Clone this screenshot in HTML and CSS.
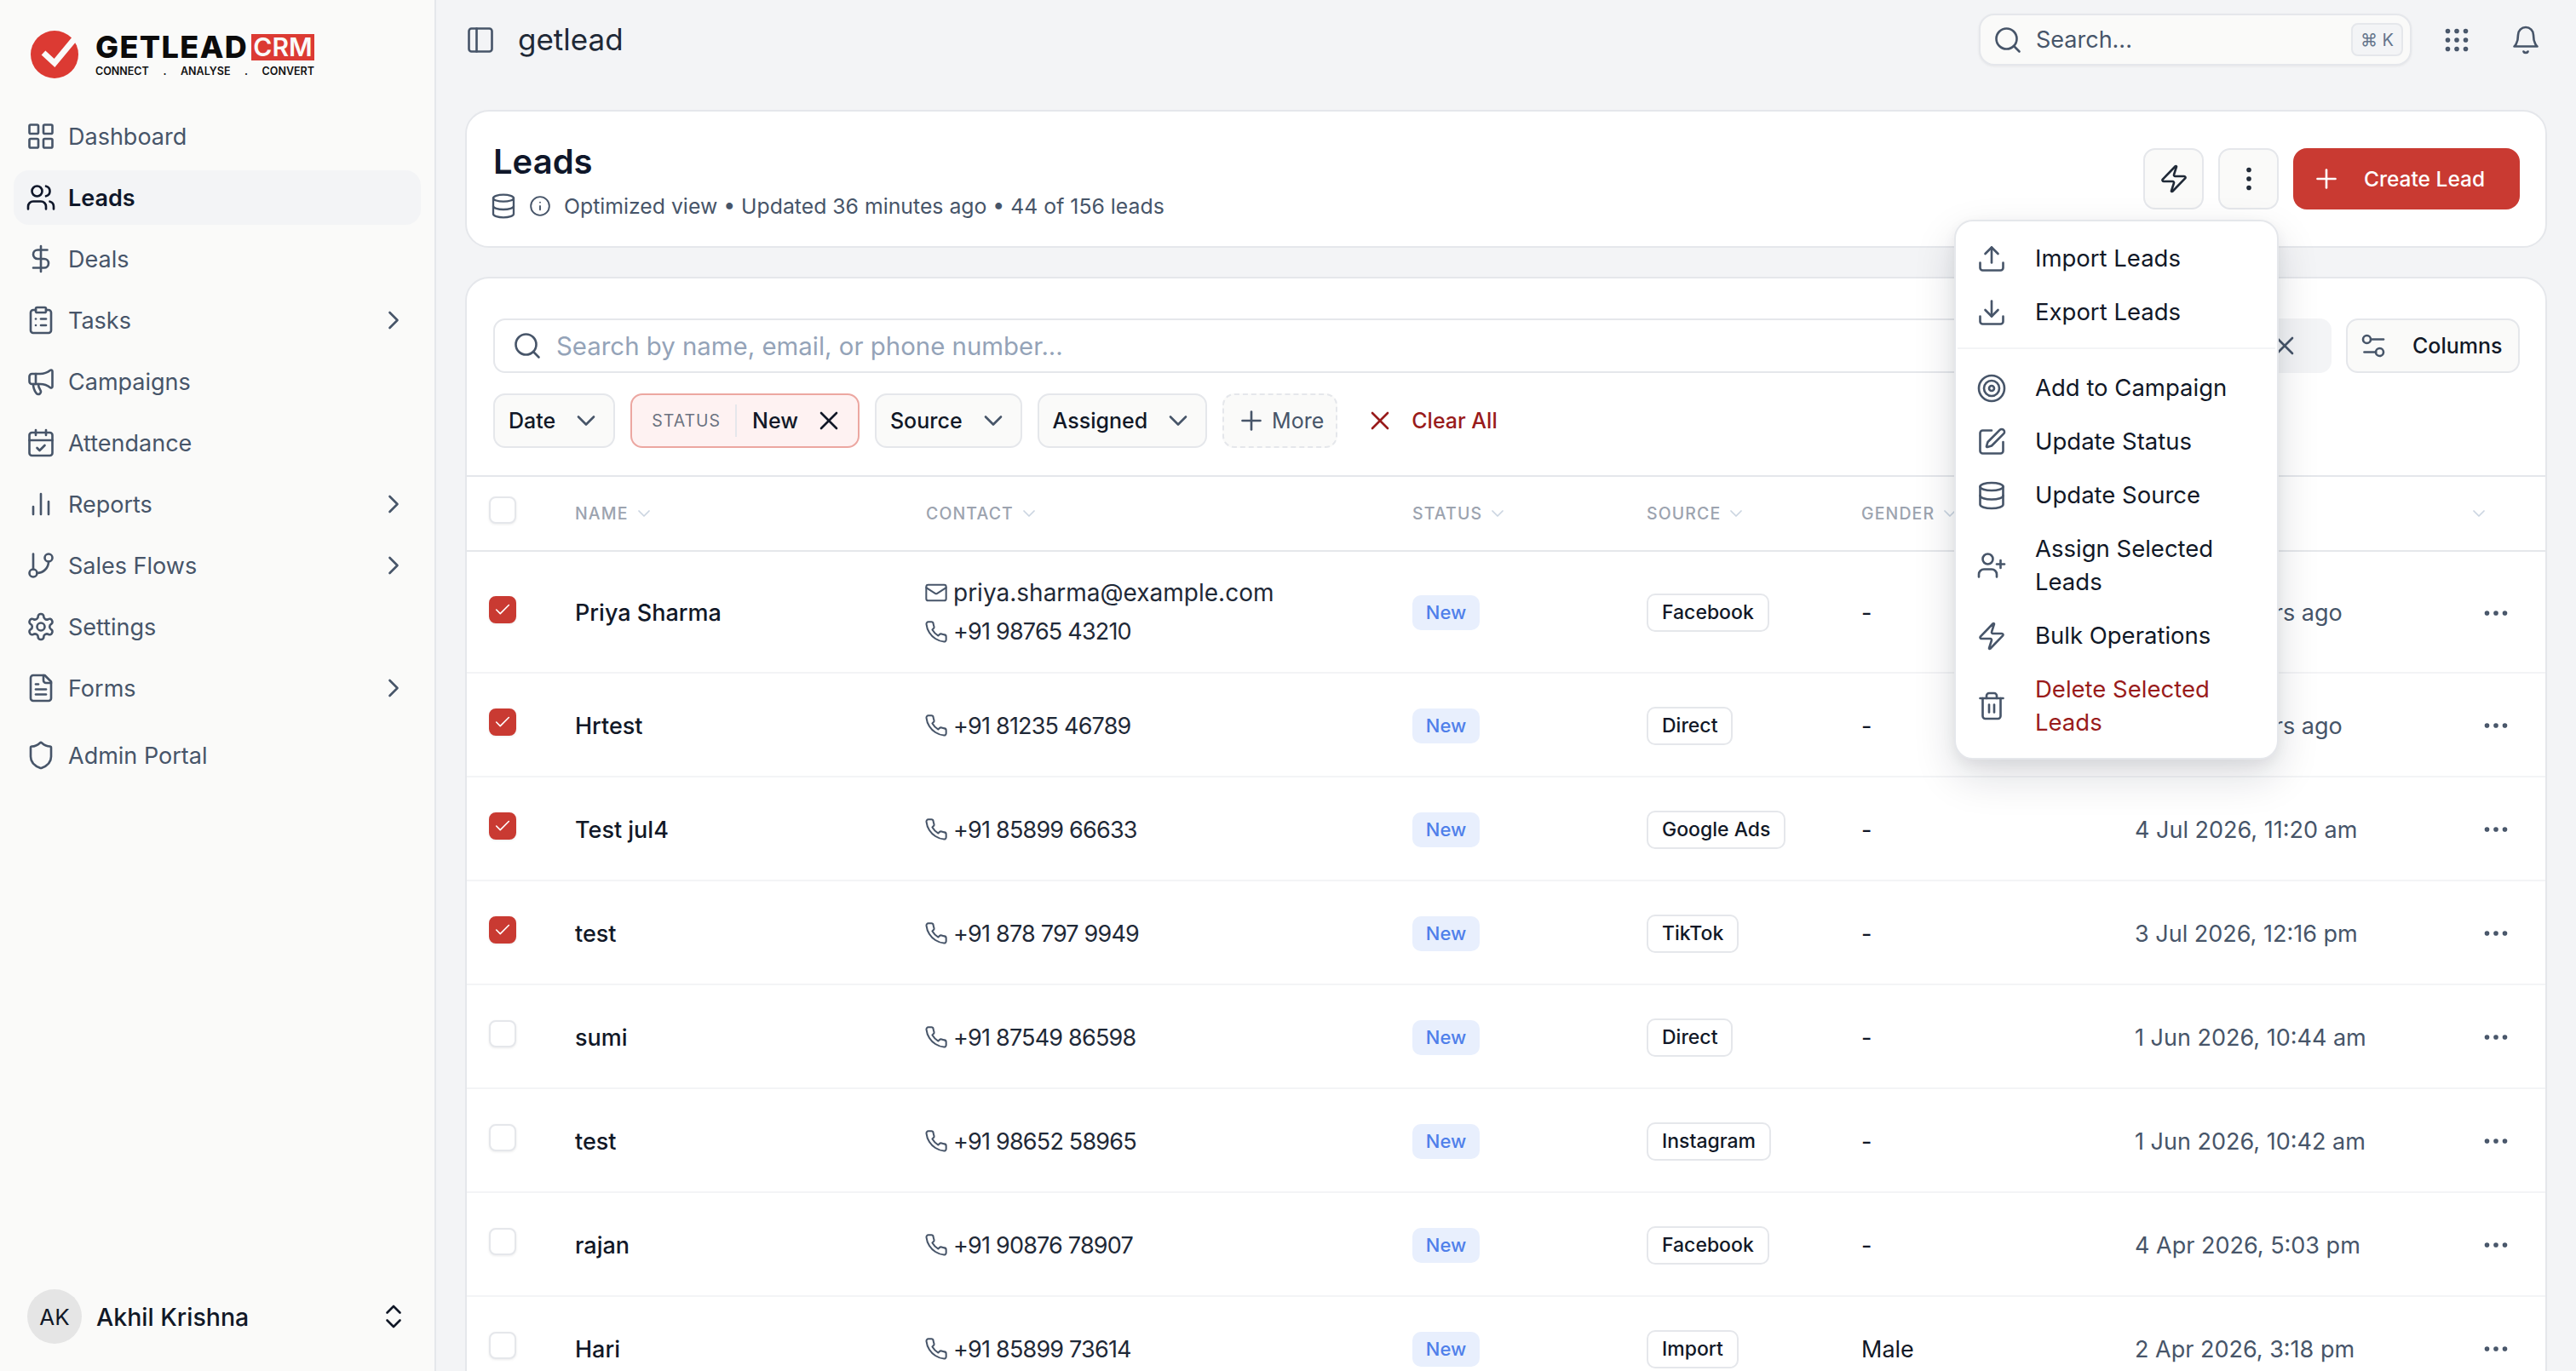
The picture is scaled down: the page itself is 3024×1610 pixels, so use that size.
FILE: index.html
```html
<!DOCTYPE html>
<html lang="en">
<head>
    <meta charset="UTF-8">
    <meta name="viewport" content="width=device-width, initial-scale=1.0">
    <title>Leads - Getlead CRM</title>
    <link rel="stylesheet" href="styles.css">
</head>
<body>
    <svg class="sprite" xmlns="http://www.w3.org/2000/svg">
        <symbol id="i-grid" viewBox="0 0 24 24"><rect x="3" y="3" width="7" height="7" rx="1"/><rect x="14" y="3" width="7" height="7" rx="1"/><rect x="14" y="14" width="7" height="7" rx="1"/><rect x="3" y="14" width="7" height="7" rx="1"/></symbol>
        <symbol id="i-users" viewBox="0 0 24 24"><path d="M16 21v-2a4 4 0 0 0-4-4H6a4 4 0 0 0-4 4v2"/><circle cx="9" cy="7" r="4"/><path d="M22 21v-2a4 4 0 0 0-3-3.87"/><path d="M16 3.13a4 4 0 0 1 0 7.75"/></symbol>
        <symbol id="i-dollar" viewBox="0 0 24 24"><path d="M12 2v20"/><path d="M17 5H9.5a3.5 3.5 0 0 0 0 7h5a3.5 3.5 0 0 1 0 7H6"/></symbol>
        <symbol id="i-clipboard" viewBox="0 0 24 24"><rect x="8" y="2" width="8" height="4" rx="1"/><path d="M16 4h2a2 2 0 0 1 2 2v14a2 2 0 0 1-2 2H6a2 2 0 0 1-2-2V6a2 2 0 0 1 2-2h2"/><path d="M12 11h4"/><path d="M12 16h4"/><path d="M8 11h.01"/><path d="M8 16h.01"/></symbol>
        <symbol id="i-megaphone" viewBox="0 0 24 24"><path d="M11 6a13 13 0 0 0 8.4-2.8A1 1 0 0 1 21 4v12a1 1 0 0 1-1.6.8A13 13 0 0 0 11 14H5a2 2 0 0 1-2-2V8a2 2 0 0 1 2-2z"/><path d="M6 14a12 12 0 0 0 2.4 7.2 2 2 0 0 0 3.2-2.4A8 8 0 0 1 10 14"/><path d="M8 6v8"/></symbol>
        <symbol id="i-calendar" viewBox="0 0 24 24"><path d="M8 2v4"/><path d="M16 2v4"/><rect x="3" y="4" width="18" height="18" rx="2"/><path d="M3 10h18"/><path d="m9 16 2 2 4-4"/></symbol>
        <symbol id="i-bars" viewBox="0 0 24 24"><path d="M18 20V10"/><path d="M12 20V4"/><path d="M6 20v-6"/></symbol>
        <symbol id="i-branch" viewBox="0 0 24 24"><path d="M6 3v12"/><circle cx="18" cy="6" r="3"/><circle cx="6" cy="18" r="3"/><path d="M18 9a9 9 0 0 1-9 9"/></symbol>
        <symbol id="i-settings" viewBox="0 0 24 24"><path d="M12.22 2h-.44a2 2 0 0 0-2 2v.18a2 2 0 0 1-1 1.73l-.43.25a2 2 0 0 1-2 0l-.15-.08a2 2 0 0 0-2.73.73l-.22.38a2 2 0 0 0 .73 2.73l.15.1a2 2 0 0 1 1 1.72v.51a2 2 0 0 1-1 1.74l-.15.09a2 2 0 0 0-.73 2.73l.22.38a2 2 0 0 0 2.73.73l.15-.08a2 2 0 0 1 2 0l.43.25a2 2 0 0 1 1 1.73V20a2 2 0 0 0 2 2h.44a2 2 0 0 0 2-2v-.18a2 2 0 0 1 1-1.73l.43-.25a2 2 0 0 1 2 0l.15.08a2 2 0 0 0 2.73-.73l.22-.39a2 2 0 0 0-.73-2.73l-.15-.08a2 2 0 0 1-1-1.74v-.5a2 2 0 0 1 1-1.74l.15-.09a2 2 0 0 0 .73-2.73l-.22-.38a2 2 0 0 0-2.73-.73l-.15.08a2 2 0 0 1-2 0l-.43-.25a2 2 0 0 1-1-1.73V4a2 2 0 0 0-2-2z"/><circle cx="12" cy="12" r="3"/></symbol>
        <symbol id="i-file" viewBox="0 0 24 24"><path d="M15 2H6a2 2 0 0 0-2 2v16a2 2 0 0 0 2 2h12a2 2 0 0 0 2-2V7Z"/><path d="M14 2v4a2 2 0 0 0 2 2h4"/><path d="M10 9H8"/><path d="M16 13H8"/><path d="M16 17H8"/></symbol>
        <symbol id="i-shield" viewBox="0 0 24 24"><path d="M20 13c0 5-3.5 7.5-7.66 8.95a1 1 0 0 1-.67-.01C7.5 20.5 4 18 4 13V6a1 1 0 0 1 1-1c2 0 4.5-1.2 6.24-2.72a1.17 1.17 0 0 1 1.52 0C14.51 3.81 17 5 19 5a1 1 0 0 1 1 1z"/></symbol>
        <symbol id="i-right" viewBox="0 0 24 24"><path d="m9 18 6-6-6-6"/></symbol>
        <symbol id="i-down" viewBox="0 0 24 24"><path d="m6 9 6 6 6-6"/></symbol>
        <symbol id="i-updown" viewBox="0 0 24 24"><path d="m7 15 5 5 5-5"/><path d="m7 9 5-5 5 5"/></symbol>
        <symbol id="i-panel" viewBox="0 0 24 24"><rect x="3" y="3" width="18" height="18" rx="2"/><path d="M9 3v18"/></symbol>
        <symbol id="i-search" viewBox="0 0 24 24"><circle cx="11" cy="11" r="8"/><path d="m21 21-4.3-4.3"/></symbol>
        <symbol id="i-grip" viewBox="0 0 24 24"><circle cx="5" cy="5" r="1"/><circle cx="12" cy="5" r="1"/><circle cx="19" cy="5" r="1"/><circle cx="5" cy="12" r="1"/><circle cx="12" cy="12" r="1"/><circle cx="19" cy="12" r="1"/><circle cx="5" cy="19" r="1"/><circle cx="12" cy="19" r="1"/><circle cx="19" cy="19" r="1"/></symbol>
        <symbol id="i-bell" viewBox="0 0 24 24"><path d="M6 8a6 6 0 0 1 12 0c0 7 3 9 3 9H3s3-2 3-9"/><path d="M10.3 21a1.94 1.94 0 0 0 3.4 0"/></symbol>
        <symbol id="i-zap" viewBox="0 0 24 24"><path d="M4 14a1 1 0 0 1-.78-1.63l9.9-10.2a.5.5 0 0 1 .86.46l-1.92 6.02A1 1 0 0 0 13 10h7a1 1 0 0 1 .78 1.63l-9.9 10.2a.5.5 0 0 1-.86-.46l1.92-6.02A1 1 0 0 0 11 14z"/></symbol>
        <symbol id="i-dots-v" viewBox="0 0 24 24"><circle cx="12" cy="5" r="1"/><circle cx="12" cy="12" r="1"/><circle cx="12" cy="19" r="1"/></symbol>
        <symbol id="i-dots-h" viewBox="0 0 24 24"><circle cx="5" cy="12" r="1"/><circle cx="12" cy="12" r="1"/><circle cx="19" cy="12" r="1"/></symbol>
        <symbol id="i-plus" viewBox="0 0 24 24"><path d="M5 12h14"/><path d="M12 5v14"/></symbol>
        <symbol id="i-db" viewBox="0 0 24 24"><ellipse cx="12" cy="5" rx="9" ry="3"/><path d="M3 5V19A9 3 0 0 0 21 19V5"/><path d="M3 12A9 3 0 0 0 21 12"/></symbol>
        <symbol id="i-info" viewBox="0 0 24 24"><circle cx="12" cy="12" r="10"/><path d="M12 16v-4"/><path d="M12 8h.01"/></symbol>
        <symbol id="i-x" viewBox="0 0 24 24"><path d="M18 6 6 18"/><path d="m6 6 12 12"/></symbol>
        <symbol id="i-sliders" viewBox="0 0 24 24"><path d="M20 7h-9"/><path d="M14 17H5"/><circle cx="17" cy="17" r="3"/><circle cx="7" cy="7" r="3"/></symbol>
        <symbol id="i-upload" viewBox="0 0 24 24"><path d="M21 15v4a2 2 0 0 1-2 2H5a2 2 0 0 1-2-2v-4"/><path d="m17 8-5-5-5 5"/><path d="M12 3v12"/></symbol>
        <symbol id="i-download" viewBox="0 0 24 24"><path d="M21 15v4a2 2 0 0 1-2 2H5a2 2 0 0 1-2-2v-4"/><path d="m7 10 5 5 5-5"/><path d="M12 15V3"/></symbol>
        <symbol id="i-target" viewBox="0 0 24 24"><circle cx="12" cy="12" r="10"/><circle cx="12" cy="12" r="6"/><circle cx="12" cy="12" r="2"/></symbol>
        <symbol id="i-pen" viewBox="0 0 24 24"><path d="M12 3H5a2 2 0 0 0-2 2v14a2 2 0 0 0 2 2h14a2 2 0 0 0 2-2v-7"/><path d="M18.375 2.625a1 1 0 0 1 3 3l-9.013 9.014a2 2 0 0 1-.853.505l-2.873.84a.5.5 0 0 1-.62-.62l.84-2.873a2 2 0 0 1 .506-.852z"/></symbol>
        <symbol id="i-user-plus" viewBox="0 0 24 24"><path d="M16 21v-2a4 4 0 0 0-4-4H6a4 4 0 0 0-4 4v2"/><circle cx="9" cy="7" r="4"/><path d="M19 8v6"/><path d="M22 11h-6"/></symbol>
        <symbol id="i-trash" viewBox="0 0 24 24"><path d="M3 6h18"/><path d="M19 6v14c0 1-1 2-2 2H7c-1 0-2-1-2-2V6"/><path d="M8 6V4c0-1 1-2 2-2h4c1 0 2 1 2 2v2"/><path d="M10 11v6"/><path d="M14 11v6"/></symbol>
        <symbol id="i-mail" viewBox="0 0 24 24"><rect x="2" y="4" width="20" height="16" rx="2"/><path d="m22 7-8.97 5.7a1.94 1.94 0 0 1-2.06 0L2 7"/></symbol>
        <symbol id="i-phone" viewBox="0 0 24 24"><path d="M22 16.92v3a2 2 0 0 1-2.18 2 19.79 19.79 0 0 1-8.63-3.07 19.5 19.5 0 0 1-6-6 19.79 19.79 0 0 1-3.07-8.67A2 2 0 0 1 4.11 2h3a2 2 0 0 1 2 1.72 12.84 12.84 0 0 0 .7 2.81 2 2 0 0 1-.45 2.11L8.09 9.91a16 16 0 0 0 6 6l1.27-1.27a2 2 0 0 1 2.11-.45 12.84 12.84 0 0 0 2.81.7A2 2 0 0 1 22 16.92z"/></symbol>
        <symbol id="i-check" viewBox="0 0 24 24"><path d="M20 6 9 17l-5-5"/></symbol>
    </svg>

    <aside class="sidebar">
        <div class="logo">
            <svg class="logo-mark" viewBox="0 0 56 56">
                <circle cx="28" cy="28" r="28" fill="#dc3a33"/>
                <path d="M15 26l13 12L52 9" fill="none" stroke="#fafaf9" stroke-width="7"/>
            </svg>
            <div class="logo-text">
                <div class="logo-top"><span class="logo-name">GETLEAD</span><span class="logo-crm">CRM</span></div>
                <div class="logo-tag"><span>CONNECT</span><span>.</span><span>ANALYSE</span><span>.</span><span>CONVERT</span></div>
            </div>
        </div>
        <nav class="nav">
            <a class="nav-item"><svg class="icon"><use href="#i-grid"/></svg>Dashboard</a>
            <a class="nav-item active"><svg class="icon"><use href="#i-users"/></svg>Leads</a>
            <a class="nav-item"><svg class="icon"><use href="#i-dollar"/></svg>Deals</a>
            <a class="nav-item"><svg class="icon"><use href="#i-clipboard"/></svg>Tasks<svg class="icon nav-arrow"><use href="#i-right"/></svg></a>
            <a class="nav-item"><svg class="icon"><use href="#i-megaphone"/></svg>Campaigns</a>
            <a class="nav-item"><svg class="icon"><use href="#i-calendar"/></svg>Attendance</a>
            <a class="nav-item"><svg class="icon"><use href="#i-bars"/></svg>Reports<svg class="icon nav-arrow"><use href="#i-right"/></svg></a>
            <a class="nav-item"><svg class="icon"><use href="#i-branch"/></svg>Sales Flows<svg class="icon nav-arrow"><use href="#i-right"/></svg></a>
            <a class="nav-item"><svg class="icon"><use href="#i-settings"/></svg>Settings</a>
            <a class="nav-item"><svg class="icon"><use href="#i-file"/></svg>Forms<svg class="icon nav-arrow"><use href="#i-right"/></svg></a>
            <a class="nav-item nav-admin"><svg class="icon"><use href="#i-shield"/></svg>Admin Portal</a>
        </nav>
        <div class="user">
            <div class="avatar">AK</div>
            <div class="user-name">Akhil Krishna</div>
            <svg class="icon user-switch"><use href="#i-updown"/></svg>
        </div>
    </aside>

    <main class="main">
        <header class="topbar">
            <svg class="icon"><use href="#i-panel"/></svg>
            <div class="workspace">getlead</div>
            <div class="global-search">
                <svg class="icon"><use href="#i-search"/></svg>
                <span class="global-search-text">Search...</span>
                <kbd class="kbd">⌘ K</kbd>
            </div>
            <svg class="icon top-grip"><use href="#i-grip"/></svg>
            <svg class="icon top-bell"><use href="#i-bell"/></svg>
        </header>

        <section class="card page-head">
            <div class="page-title">
                <h1>Leads</h1>
                <div class="page-sub">
                    <svg class="icon icon-db"><use href="#i-db"/></svg>
                    <svg class="icon icon-info"><use href="#i-info"/></svg>
                    <span>Optimized view • Updated 36 minutes ago • 44 of 156 leads</span>
                </div>
            </div>
            <div class="page-actions">
                <button class="square-btn"><svg class="icon"><use href="#i-zap"/></svg></button>
                <div class="menu-wrap">
                    <button class="square-btn"><svg class="icon"><use href="#i-dots-v"/></svg></button>
                    <div class="menu">
                        <div class="menu-item"><svg class="icon"><use href="#i-upload"/></svg>Import Leads</div>
                        <div class="menu-item"><svg class="icon"><use href="#i-download"/></svg>Export Leads</div>
                        <div class="menu-divider"></div>
                        <div class="menu-item"><svg class="icon"><use href="#i-target"/></svg>Add to Campaign</div>
                        <div class="menu-item"><svg class="icon"><use href="#i-pen"/></svg>Update Status</div>
                        <div class="menu-item"><svg class="icon"><use href="#i-db"/></svg>Update Source</div>
                        <div class="menu-item"><svg class="icon"><use href="#i-user-plus"/></svg>Assign Selected Leads</div>
                        <div class="menu-item"><svg class="icon"><use href="#i-zap"/></svg>Bulk Operations</div>
                        <div class="menu-item danger"><svg class="icon"><use href="#i-trash"/></svg>Delete Selected Leads</div>
                    </div>
                </div>
                <button class="create-btn"><svg class="icon"><use href="#i-plus"/></svg>Create Lead</button>
            </div>
        </section>

        <section class="card leads-card">
            <div class="toolbar">
                <div class="search-row">
                    <div class="lead-search">
                        <svg class="icon"><use href="#i-search"/></svg>
                        <span class="placeholder">Search by name, email, or phone number...</span>
                    </div>
                    <button class="search-clear"><svg class="icon"><use href="#i-x"/></svg></button>
                    <button class="chip columns-btn"><svg class="icon"><use href="#i-sliders"/></svg>Columns</button>
                </div>
                <div class="filter-row">
                    <button class="chip">Date<svg class="icon"><use href="#i-down"/></svg></button>
                    <button class="chip chip-active"><span class="chip-key">STATUS</span><span class="chip-val">New</span><svg class="icon"><use href="#i-x"/></svg></button>
                    <button class="chip">Source<svg class="icon"><use href="#i-down"/></svg></button>
                    <button class="chip">Assigned<svg class="icon"><use href="#i-down"/></svg></button>
                    <button class="chip chip-more"><svg class="icon"><use href="#i-plus"/></svg>More</button>
                    <button class="clear-all"><svg class="icon"><use href="#i-x"/></svg>Clear All</button>
                </div>
            </div>
            <table class="leads">
                <colgroup>
                    <col class="c-check"><col class="c-name"><col class="c-contact"><col class="c-status"><col class="c-source"><col class="c-gender"><col class="c-date"><col class="c-actions">
                </colgroup>
                <thead>
                    <tr>
                        <th><span class="box"></span></th>
                        <th>NAME<svg class="icon sort"><use href="#i-down"/></svg></th>
                        <th>CONTACT<svg class="icon sort"><use href="#i-down"/></svg></th>
                        <th>STATUS<svg class="icon sort"><use href="#i-down"/></svg></th>
                        <th>SOURCE<svg class="icon sort"><use href="#i-down"/></svg></th>
                        <th>GENDER<svg class="icon sort"><use href="#i-down"/></svg></th>
                        <th>CREATED</th>
                        <th class="actions-head"><svg class="icon sort"><use href="#i-down"/></svg></th>
                    </tr>
                </thead>
                <tbody>
                    <tr class="row-tall">
                        <td><span class="box checked"><svg class="icon"><use href="#i-check"/></svg></span></td>
                        <td class="name">Priya Sharma</td>
                        <td>
                            <div class="contact contact-email"><svg class="icon"><use href="#i-mail"/></svg>priya.sharma@example.com</div>
                            <div class="contact phone"><svg class="icon"><use href="#i-phone"/></svg>+91 98765 43210</div>
                        </td>
                        <td><span class="badge">New</span></td>
                        <td><span class="source">Facebook</span></td>
                        <td>-</td>
                        <td class="date">about 16 hours ago</td>
                        <td class="row-menu"><svg class="icon"><use href="#i-dots-h"/></svg></td>
                    </tr>
                    <tr>
                        <td><span class="box checked"><svg class="icon"><use href="#i-check"/></svg></span></td>
                        <td class="name">Hrtest</td>
                        <td><div class="contact phone"><svg class="icon"><use href="#i-phone"/></svg>+91 81235 46789</div></td>
                        <td><span class="badge">New</span></td>
                        <td><span class="source">Direct</span></td>
                        <td>-</td>
                        <td class="date">about 16 hours ago</td>
                        <td class="row-menu"><svg class="icon"><use href="#i-dots-h"/></svg></td>
                    </tr>
                    <tr>
                        <td><span class="box checked"><svg class="icon"><use href="#i-check"/></svg></span></td>
                        <td class="name">Test jul4</td>
                        <td><div class="contact phone"><svg class="icon"><use href="#i-phone"/></svg>+91 85899 66633</div></td>
                        <td><span class="badge">New</span></td>
                        <td><span class="source">Google Ads</span></td>
                        <td>-</td>
                        <td class="date">4 Jul 2026, 11:20 am</td>
                        <td class="row-menu"><svg class="icon"><use href="#i-dots-h"/></svg></td>
                    </tr>
                    <tr>
                        <td><span class="box checked"><svg class="icon"><use href="#i-check"/></svg></span></td>
                        <td class="name">test</td>
                        <td><div class="contact phone"><svg class="icon"><use href="#i-phone"/></svg>+91 878 797 9949</div></td>
                        <td><span class="badge">New</span></td>
                        <td><span class="source">TikTok</span></td>
                        <td>-</td>
                        <td class="date">3 Jul 2026, 12:16 pm</td>
                        <td class="row-menu"><svg class="icon"><use href="#i-dots-h"/></svg></td>
                    </tr>
                    <tr>
                        <td><span class="box"></span></td>
                        <td class="name">sumi</td>
                        <td><div class="contact phone"><svg class="icon"><use href="#i-phone"/></svg>+91 87549 86598</div></td>
                        <td><span class="badge">New</span></td>
                        <td><span class="source">Direct</span></td>
                        <td>-</td>
                        <td class="date">1 Jun 2026, 10:44 am</td>
                        <td class="row-menu"><svg class="icon"><use href="#i-dots-h"/></svg></td>
                    </tr>
                    <tr>
                        <td><span class="box"></span></td>
                        <td class="name">test</td>
                        <td><div class="contact phone"><svg class="icon"><use href="#i-phone"/></svg>+91 98652 58965</div></td>
                        <td><span class="badge">New</span></td>
                        <td><span class="source">Instagram</span></td>
                        <td>-</td>
                        <td class="date">1 Jun 2026, 10:42 am</td>
                        <td class="row-menu"><svg class="icon"><use href="#i-dots-h"/></svg></td>
                    </tr>
                    <tr>
                        <td><span class="box"></span></td>
                        <td class="name">rajan</td>
                        <td><div class="contact phone"><svg class="icon"><use href="#i-phone"/></svg>+91 90876 78907</div></td>
                        <td><span class="badge">New</span></td>
                        <td><span class="source">Facebook</span></td>
                        <td>-</td>
                        <td class="date">4 Apr 2026, 5:03 pm</td>
                        <td class="row-menu"><svg class="icon"><use href="#i-dots-h"/></svg></td>
                    </tr>
                    <tr>
                        <td><span class="box"></span></td>
                        <td class="name">Hari</td>
                        <td><div class="contact phone"><svg class="icon"><use href="#i-phone"/></svg>+91 85899 73614</div></td>
                        <td><span class="badge">New</span></td>
                        <td><span class="source">Import</span></td>
                        <td>Male</td>
                        <td class="date">2 Apr 2026, 3:18 pm</td>
                        <td class="row-menu"><svg class="icon"><use href="#i-dots-h"/></svg></td>
                    </tr>
                </tbody>
            </table>
        </section>
    </main>
</body>
</html>
```

FILE: styles.css
```css
* {
    box-sizing: border-box;
}

body {
    font-family: Inter, "Noto Sans", sans-serif;
    font-size: 27px;
    color: #111827;
    background: #f3f4f6;
    margin: 0;
    height: 100vh;
    overflow: hidden;
    display: flex;
}

button {
    font: inherit;
    color: inherit;
    cursor: pointer;
}

.sprite {
    display: none;
}

.icon {
    width: 36px;
    height: 36px;
    flex: none;
    fill: none;
    stroke: currentColor;
    stroke-width: 1.75;
    stroke-linecap: round;
    stroke-linejoin: round;
}

/* sidebar */
.sidebar {
    width: 512px;
    flex: none;
    background: #fafaf9;
    border-right: 2px solid #e5e7eb;
    display: flex;
    flex-direction: column;
    padding: 0 16px;
}

.logo {
    display: flex;
    align-items: flex-start;
    gap: 20px;
    padding: 36px 0 0 20px;
    height: 128px;
}

.logo-mark {
    width: 56px;
    height: 56px;
    flex: none;
}

.logo-text {
    width: 257px;
    padding-top: 4px;
}

.logo-top {
    display: flex;
    justify-content: space-between;
    align-items: center;
    height: 31px;
}

.logo-name {
    font-weight: 800;
    font-size: 36px;
    letter-spacing: 1.4px;
    color: #0b0b0b;
    line-height: 31px;
}

.logo-crm {
    background: #dc3a33;
    color: #fafaf9;
    font-weight: 600;
    font-size: 30px;
    line-height: 31px;
    width: 74px;
    text-align: center;
}

.logo-tag {
    display: flex;
    justify-content: space-between;
    font-size: 12.5px;
    font-weight: 600;
    color: #111;
    margin-top: 6px;
    line-height: 14px;
}

.nav {
    display: flex;
    flex-direction: column;
    gap: 8px;
}

.nav-item {
    display: flex;
    align-items: center;
    gap: 14px;
    height: 64px;
    padding: 0 14px;
    border-radius: 18px;
    color: #475569;
}

.nav-item.active {
    background: #f3f4f6;
    color: #0f172a;
    font-weight: 600;
}

.nav-arrow {
    margin-left: auto;
}

.nav-admin {
    margin-top: 7px;
}

.user {
    margin-top: auto;
    display: flex;
    align-items: center;
    height: 64px;
    margin-bottom: 32px;
    padding-left: 16px;
    gap: 17px;
    font-size: 28.5px;
    font-weight: 500;
}

.avatar {
    width: 64px;
    height: 64px;
    border-radius: 50%;
    background: #e5e5e5;
    display: flex;
    align-items: center;
    justify-content: center;
    font-weight: 400;
    font-size: 26px;
}

.user-switch {
    margin-left: auto;
    margin-right: 14px;
}

/* main column */
.main {
    flex: 1;
    min-width: 0;
    padding: 0 34px;
}

.topbar {
    height: 129px;
    padding-top: 16px;
    display: flex;
    align-items: flex-start;
    color: #475569;
}

.topbar > .icon {
    margin-top: 13px;
}

.workspace {
    margin-left: 26px;
    font-size: 35px;
    line-height: 60px;
    color: #1f2937;
}

.global-search {
    margin-left: auto;
    width: 508px;
    height: 61px;
    display: flex;
    align-items: center;
    gap: 15px;
    padding: 0 8px 0 14px;
    background: #fafaf9;
    border: 2px solid #e5e7eb;
    border-radius: 18px;
    box-shadow: 0 1px 3px rgba(0,0,0,0.06);
}

.global-search-text {
    flex: 1;
}

.kbd {
    width: 61px;
    height: 39px;
    display: flex;
    align-items: center;
    justify-content: center;
    font-family: Inter, "DejaVu Sans", sans-serif;
    font-size: 20px;
    color: #64748b;
    background: #f3f4f6;
    border: 2px solid #e5e7eb;
    border-radius: 8px;
}

.top-grip {
    margin-left: 35px;
}

.top-bell {
    margin-left: 45px;
    margin-right: 7px;
}

.card {
    background: #fff;
    border: 2px solid #e5e7eb;
    border-radius: 28px;
}

.page-head {
    height: 162px;
    padding: 0 30px 0 31px;
    display: flex;
    align-items: center;
    justify-content: space-between;
}

.page-title {
    padding-top: 6px;
}

h1 {
    font-size: 40px;
    font-weight: 600;
    line-height: 48px;
    margin: 0 0 10px;
    color: #0f172a;
}

.page-sub {
    display: flex;
    align-items: center;
    font-size: 24.8px;
    color: #475569;
    height: 36px;
}

.icon-db {
    width: 32px;
    height: 32px;
    margin-left: -4px;
}

.icon-info {
    width: 26px;
    height: 26px;
    margin-left: 14px;
    margin-right: 15px;
}

.page-actions {
    display: flex;
    gap: 17px;
}

.square-btn {
    width: 71px;
    height: 72px;
    background: #fafaf9;
    border: 2px solid #e5e7eb;
    border-radius: 14px;
    display: flex;
    align-items: center;
    justify-content: center;
    color: #1f2937;
    padding: 0;
}

.create-btn {
    width: 266px;
    height: 72px;
    background: #c93a32;
    color: #fff;
    border: 0;
    border-radius: 16px;
    font-size: 24.5px;
    font-weight: 500;
    display: flex;
    align-items: center;
    gap: 26px;
    padding: 0 0 0 21px;
}

/* actions dropdown */
.menu-wrap {
    position: relative;
}

.menu {
    position: absolute;
    top: 84px;
    right: 0;
    width: 381px;
    height: 634px;
    background: #fff;
    border: 2px solid #e5e7eb;
    border-radius: 22px;
    box-shadow: 0 20px 50px rgba(15,23,42,0.14), 0 6px 16px rgba(15,23,42,0.06);
    padding: 12px 2px;
    z-index: 10;
}

.menu-item {
    display: flex;
    align-items: center;
    gap: 33px;
    padding: 12px 22px;
    font-size: 27.5px;
    line-height: 39px;
    color: #111827;
}

.menu-item .icon {
    color: #475569;
}

.menu-item.danger {
    color: #991b1b;
}

.menu-divider {
    height: 2px;
    background: #f3f4f6;
    margin: 10px 0 14px;
}

/* leads card */
.leads-card {
    margin-top: 34px;
    border-radius: 28px 28px 0 0;
}

.toolbar {
    padding: 47px 30px 32px 31px;
}

.search-row {
    display: flex;
    gap: 17px;
}

.lead-search {
    flex: 1;
    height: 64px;
    display: flex;
    align-items: center;
    gap: 16px;
    padding-left: 20px;
    border: 2px solid #e5e7eb;
    border-radius: 14px;
    color: #475569;
    margin-right: -5px;
}

.placeholder {
    color: #94a3b8;
    font-size: 29.4px;
}

.search-clear {
    width: 100px;
    height: 64px;
    background: #f3f4f6;
    border: 0;
    border-radius: 14px;
    display: flex;
    align-items: center;
    padding: 0 0 0 27px;
    color: #475569;
}

.chip {
    height: 64px;
    display: flex;
    align-items: center;
    gap: 18px;
    padding: 0 14px 0 16px;
    background: #fafaf9;
    border: 2px solid #e5e7eb;
    border-radius: 14px;
    font-size: 25px;
    font-weight: 500;
    color: #111827;
}

.columns-btn {
    width: 204px;
    padding-left: 12px;
    gap: 28px;
}

.chip .icon {
    color: #475569;
}

.filter-row {
    display: flex;
    gap: 18px;
    margin-top: 24px;
}

.chip-active {
    background: #fef2f2;
    border-color: #eca7a1;
    padding-left: 23px;
    padding-right: 16px;
    gap: 18px;
}

.chip-active .icon {
    color: #111827;
}

.chip-key {
    font-size: 19.5px;
    font-weight: 400;
    letter-spacing: 1px;
    color: #6b7280;
    padding-right: 17px;
    border-right: 2px solid #e5e7eb;
    line-height: 38px;
}

.chip-more {
    border-style: dashed;
    gap: 6px;
    color: #475569;
    font-weight: 400;
    padding: 0 14px;
}

.clear-all {
    background: none;
    border: 0;
    display: flex;
    align-items: center;
    gap: 19px;
    color: #991b1b;
    font-size: 25px;
    font-weight: 500;
    padding: 0 0 0 14px;
}

/* table */
.leads {
    width: 100%;
    border-collapse: collapse;
    table-layout: fixed;
}

.c-check { width: 127px; }
.c-name { width: 412px; }
.c-contact { width: 571px; }
.c-status { width: 275px; }
.c-source { width: 252px; }
.c-gender { width: 321px; }
.c-date { width: 378px; }

.leads th {
    height: 88px;
    text-align: left;
    font-size: 19.5px;
    font-weight: 500;
    letter-spacing: 1.1px;
    color: #9ca3af;
    border-top: 2px solid #e5e7eb;
    border-bottom: 2px solid #e5e7eb;
    padding: 0;
    white-space: nowrap;
}

.sort {
    width: 24px;
    height: 24px;
    color: #cbd5e1;
    vertical-align: middle;
    margin-left: 6px;
    margin-top: -2px;
}

.leads th.actions-head {
    text-align: right;
    padding-right: 66px;
}

.leads td {
    height: 122px;
    padding: 2px 0 0;
    border-bottom: 2px solid #f3f4f6;
}

.leads .row-tall td {
    height: 143px;
}

.leads th:first-child,
.leads td:first-child {
    padding-left: 26px;
}

.box {
    display: block;
    width: 32px;
    height: 32px;
    border: 2px solid #e5e7eb;
    border-radius: 8px;
    background: #fff;
    box-shadow: 0 1px 3px rgba(0,0,0,0.08);
    margin-bottom: 8px;
}

.box.checked {
    background: #c93a32;
    border-color: #c93a32;
    color: #fff;
    display: flex;
    align-items: center;
    justify-content: center;
}

.box.checked .icon {
    width: 22px;
    height: 22px;
}

.name {
    font-weight: 500;
}

.contact {
    display: flex;
    align-items: center;
    gap: 6px;
    margin-left: -2px;
    font-size: 28px;
    color: #1f2937;
}

.contact.phone {
    font-size: 27px;
    letter-spacing: -0.8px;
}

.contact .icon {
    width: 28px;
    height: 28px;
    color: #475569;
}

.contact-email {
    margin-top: -2px;
    margin-bottom: 12px;
}

.badge {
    display: block;
    width: 79px;
    height: 41px;
    line-height: 41px;
    text-align: center;
    font-size: 22px;
    font-weight: 500;
    color: #4f7fea;
    background: #e8effd;
    border-radius: 10px;
}

.source {
    display: block;
    width: fit-content;
    height: 45px;
    line-height: 41px;
    padding: 0 16px;
    font-size: 23px;
    font-weight: 500;
    background: #fff;
    border: 2px solid #e5e7eb;
    border-radius: 10px;
}

.date {
    color: #475569;
    white-space: nowrap;
}

.leads td.row-menu {
    text-align: right;
    padding-right: 40px;
    color: #475569;
}

.row-menu .icon {
    vertical-align: middle;
}
```
